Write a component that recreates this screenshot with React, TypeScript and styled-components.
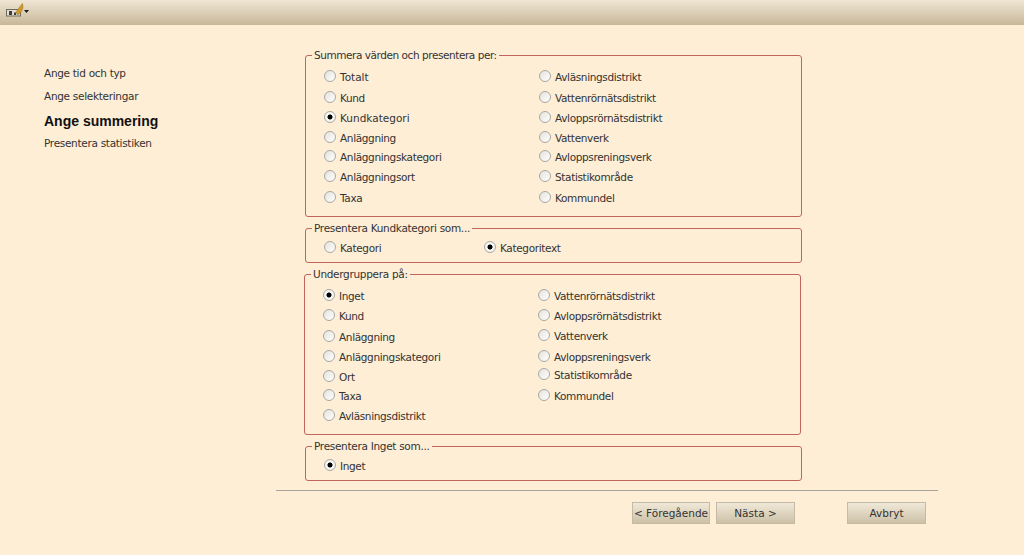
import React from 'react';
import styled, { createGlobalStyle } from 'styled-components';

const GlobalStyle = createGlobalStyle`
  html, body {
    margin: 0;
    padding: 0;
    background: #feeed6;
    font-family: 'DejaVu Sans', Verdana, sans-serif;
    font-size: 10.5px;
    color: #333;
  }
`;

const Page = styled.div`
  width: 1024px;
  height: 555px;
  overflow: hidden;
  display: flex;
  flex-direction: column;
  background: #feeed6;
`;

const TopBar = styled.div`
  height: 25px;
  flex: none;
  display: flex;
  align-items: flex-start;
  padding-left: 5px;
  background: linear-gradient(#efe6d4, #c8b899);
`;

const Body = styled.div`
  flex: 1;
  display: flex;
`;

const Steps = styled.nav`
  width: 276px;
  flex: none;
  display: flex;
  flex-direction: column;
  padding: 36px 0 0 44px;
  box-sizing: border-box;
`;

const Step = styled.div<{ $active?: boolean; $h: number }>`
  height: ${(p) => p.$h}px;
  display: flex;
  align-items: center;
  font-size: ${(p) => (p.$active ? '14px' : '10.5px')};
  font-weight: ${(p) => (p.$active ? 700 : 400)};
  font-family: ${(p) => (p.$active ? "'Liberation Sans', sans-serif" : 'inherit')};
  letter-spacing: ${(p) => (p.$active ? '0' : '-0.3px')};
  color: ${(p) => (p.$active ? '#111' : '#333')};
`;

const Main = styled.main`
  width: 662px;
  flex: none;
  display: flex;
  flex-direction: column;
`;

const Groups = styled.div`
  display: flex;
  flex-direction: column;
  margin: 24px 0 0 29px;
  width: 497px;
`;

const Group = styled.fieldset<{ $h: number; $mt: number; $shift?: boolean }>`
  height: ${(p) => p.$h}px;
  margin: ${(p) => p.$mt}px ${(p) => (p.$shift ? '1px' : '0')} 0 ${(p) => (p.$shift ? '-1px' : '0')};
  padding: 0;
  box-sizing: border-box;
  border: 1px solid #c2645e;
  border-radius: 3px;
  min-width: 0;
`;

const Legend = styled.legend<{ $tight?: boolean }>`
  padding: 0 2px;
  margin-left: 6px;
  line-height: 13px;
  font-size: 10.5px;
  letter-spacing: ${(p) => (p.$tight ? '-0.44px' : '-0.3px')};
`;

const Columns = styled.div<{ $second?: number; $top: number }>`
  display: grid;
  grid-template-columns: ${(p) => p.$second ?? 215}px 1fr;
  padding: ${(p) => p.$top}px 0 0 18px;
`;

const Column = styled.div`
  display: flex;
  flex-direction: column;
`;

const Option = styled.label<{ $h: number; $loose?: boolean }>`
  height: ${(p) => p.$h}px;
  line-height: 20px;
  display: flex;
  align-items: flex-start;
  gap: 4px;
  letter-spacing: ${(p) => (p.$loose ? '0' : '-0.35px')};
`;

const Dot = styled.span<{ $on?: boolean }>`
  width: 12px;
  height: 12px;
  margin-top: 3px;
  flex: none;
  box-sizing: border-box;
  border-radius: 50%;
  border: 1px solid #a8a8a2;
  background: ${(p) =>
    p.$on
      ? 'radial-gradient(circle, #000 0 2.1px, #f6f6f2 2.9px)'
      : 'linear-gradient(135deg, #e4e2dc, #fff)'};
`;

const Rule = styled.hr`
  width: 662px;
  height: 1px;
  border: 0;
  margin: 9px 0 0;
  background: #a8a49c;
`;

const Footer = styled.div`
  display: flex;
  margin: 11px 0 0 356px;
`;

const Button = styled.button<{ $w: number; $ml?: number }>`
  width: ${(p) => p.$w}px;
  height: 22px;
  margin-left: ${(p) => p.$ml ?? 0}px;
  padding: 0;
  font: inherit;
  color: #333;
  border: 1px solid #c4baa6;
  background: linear-gradient(#f0e8d8, #cdc1a7);
`;

const LOOSE = ['Totalt', 'Kundkategori'];

const Col = ({ items, on, rows }: { items: string[]; on?: string; rows: number[] }) => (
  <Column>
    {items.map((t, i) => (
      <Option key={t} $h={rows[i]} $loose={LOOSE.includes(t)}>
        <Dot $on={t === on} />
        {t}
      </Option>
    ))}
  </Column>
);

const AppIcon = () => (
  <svg width="24" height="25" viewBox="0 0 24 25">
    <rect x="1.5" y="9.5" width="14" height="6.5" fill="#e4ded0" stroke="#6e6a60" />
    <rect x="4" y="11" width="3" height="4" fill="#3c3c3c" />
    <rect x="9" y="12.5" width="2" height="2.5" fill="#3c3c3c" />
    <path d="M11 12 L15 6.5 L17.5 3.5 L18 8 L15.5 13 L12.5 15 Z" fill="#cf9a2a" stroke="#8f6a18" strokeWidth="0.5" />
    <path d="M19 10 h5 l-2.5 3 Z" fill="#1c1c1c" />
  </svg>
);

const rows1 = [21, 20, 20, 19, 20, 21, 20];

export default function App() {
  return (
    <Page>
      <GlobalStyle />
      <TopBar>
        <AppIcon />
      </TopBar>
      <Body>
        <Steps>
          <Step $h={23}>Ange tid och typ</Step>
          <Step $h={23}>Ange selekteringar</Step>
          <Step $h={27} $active>Ange summering</Step>
          <Step $h={17}>Presentera statistiken</Step>
        </Steps>
        <Main>
          <Groups>
            <Group $h={168} $mt={0}>
              <Legend $tight>Summera värden och presentera per:</Legend>
              <Columns $top={5}>
                <Col
                  on="Kundkategori"
                  rows={rows1}
                  items={['Totalt', 'Kund', 'Kundkategori', 'Anläggning', 'Anläggningskategori', 'Anläggningsort', 'Taxa']}
                />
                <Col
                  rows={rows1}
                  items={['Avläsningsdistrikt', 'Vattenrörnätsdistrikt', 'Avloppsrörnätsdistrikt', 'Vattenverk', 'Avloppsreningsverk', 'Statistikområde', 'Kommundel']}
                />
              </Columns>
            </Group>
            <Group $h={41} $mt={5}>
              <Legend>Presentera Kundkategori som...</Legend>
              <Columns $top={3} $second={160}>
                <Col rows={[20]} items={['Kategori']} />
                <Col on="Kategoritext" rows={[20]} items={['Kategoritext']} />
              </Columns>
            </Group>
            <Group $h={167} $mt={5} $shift>
              <Legend>Undergruppera på:</Legend>
              <Columns $top={5}>
                <Col
                  on="Inget"
                  rows={[20, 21, 20, 20, 19, 20, 20]}
                  items={['Inget', 'Kund', 'Anläggning', 'Anläggningskategori', 'Ort', 'Taxa', 'Avläsningsdistrikt']}
                />
                <Col
                  rows={[20, 20, 21, 18, 21, 20]}
                  items={['Vattenrörnätsdistrikt', 'Avloppsrörnätsdistrikt', 'Vattenverk', 'Avloppsreningsverk', 'Statistikområde', 'Kommundel']}
                />
              </Columns>
            </Group>
            <Group $h={41} $mt={5}>
              <Legend>Presentera Inget som...</Legend>
              <Columns $top={3}>
                <Col on="Inget" rows={[20]} items={['Inget']} />
              </Columns>
            </Group>
          </Groups>
          <Rule />
          <Footer>
            <Button $w={78}>&lt; Föregående</Button>
            <Button $w={79} $ml={6}>Nästa &gt;</Button>
            <Button $w={79} $ml={52}>Avbryt</Button>
          </Footer>
        </Main>
      </Body>
    </Page>
  );
}
